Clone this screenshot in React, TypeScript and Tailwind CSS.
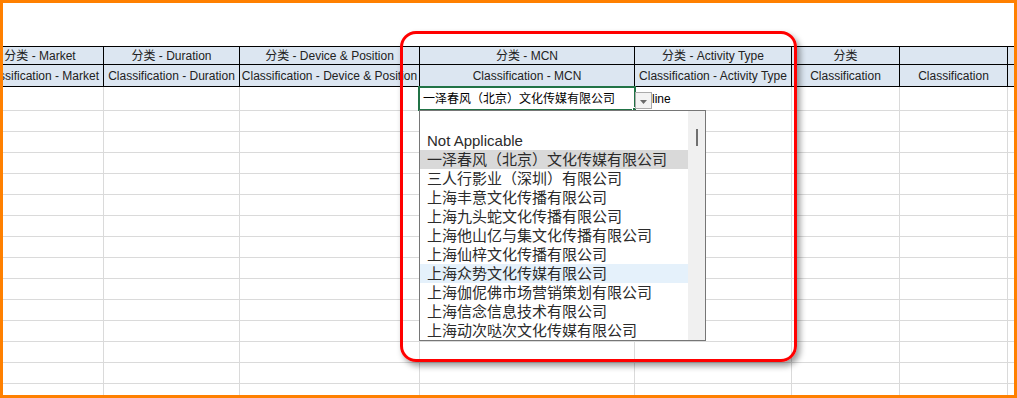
const colW = [
  "w-[127px]",
  "w-[136px]",
  "w-[180px]",
  "w-[215px]",
  "w-[157px]",
  "w-[108px]",
  "w-[108px]",
  "w-[220px]",
];

const head1 = ["分类 - Market", "分类 - Duration", "分类 - Device & Position", "分类 - MCN", "分类 - Activity Type", "分类", "", ""];
const head2 = [
  "Classification - Market",
  "Classification - Duration",
  "Classification - Device & Position",
  "Classification - MCN",
  "Classification - Activity Type",
  "Classification",
  "Classification",
  "",
];

const options = [
  "Not Applicable",
  "一泽春风（北京）文化传媒有限公司",
  "三人行影业（深圳）有限公司",
  "上海丰意文化传播有限公司",
  "上海九头蛇文化传播有限公司",
  "上海他山亿与集文化传播有限公司",
  "上海仙梓文化传播有限公司",
  "上海众势文化传媒有限公司",
  "上海伽伲佛市场营销策划有限公司",
  "上海信念信息技术有限公司",
  "上海动次哒次文化传媒有限公司",
];

const font = "font-['Liberation_Sans','Noto_Sans_CJK_SC',sans-serif]";

const App = () => {
  return (
    <div className="w-[1017px] h-[398px] border-[3px] border-[#ff8000] bg-white overflow-hidden">
      <div className={`relative w-full h-full overflow-hidden pt-[43px] ${font}`}>
        <div className="-ml-[26px] w-max text-[12px] text-[#222]">
          {/* header row 1 */}
          <div className="flex">
            {head1.map((t, i) => (
              <div
                key={i}
                className={`${colW[i]} h-[19px] shrink-0 bg-[#dce6f1] border-t border-b border-r border-black flex items-center justify-center whitespace-nowrap overflow-hidden leading-none`}
              >
                {t}
              </div>
            ))}
          </div>
          {/* header row 2 */}
          <div className="flex">
            {head2.map((t, i) => (
              <div
                key={i}
                className={`${colW[i]} h-[22px] shrink-0 bg-[#dce6f1] border-b border-r border-black flex items-center justify-center whitespace-nowrap overflow-visible leading-none`}
              >
                {t}
              </div>
            ))}
          </div>
          {/* first data row */}
          <div className="flex">
            {colW.map((w, i) => (
              <div
                key={i}
                className={`${w} h-[24px] shrink-0 border-b border-r border-[#dadada] flex items-center whitespace-nowrap overflow-hidden leading-none`}
              >
                {i === 3 && <span className="pl-[3px] text-black">一泽春风（北京）文化传媒有限公司</span>}
                {i === 4 && <span className="pl-[1px] text-black">Online</span>}
              </div>
            ))}
          </div>
          {Array.from({ length: 15 }).map((_, r) => (
            <div key={r} className="flex">
              {colW.map((w, i) => (
                <div key={i} className={`${w} h-[21px] shrink-0 border-b border-r border-[#dadada]`} />
              ))}
            </div>
          ))}
        </div>

        {/* active cell */}
        <div className="absolute left-[415px] top-[83px] w-[218px] h-[25px] border-2 border-[#217346]" />
        <div className="absolute left-[629px] top-[104px] w-[5px] h-[5px] bg-[#217346] border border-white" />

        {/* dropdown button */}
        <div className="absolute left-[632px] top-[89px] w-[17px] h-[17px] border border-[#ababab] bg-[#f3f3f3] flex items-center justify-center">
          <svg width="7" height="4" viewBox="0 0 7 4" className="mt-[2px]">
            <path d="M0 0 L7 0 L3.5 4 Z" fill="#6b6b6b" />
          </svg>
        </div>

        {/* dropdown list */}
        <div className="absolute left-[416px] top-[107px] w-[287px] h-[231px] border border-[#767676] bg-white flex">
          <div className="flex-1 pt-[20px]">
            {options.map((o, i) => (
              <div
                key={o}
                className={`h-[19px] pl-[7px] flex items-center text-[15px] leading-none whitespace-nowrap text-[#2b2b2b] ${
                  i === 1 ? "bg-[#d9d9d9]" : i === 7 ? "bg-[#e5f1fb]" : ""
                }`}
              >
                {o}
              </div>
            ))}
          </div>
          <div className="w-[17px] bg-[#f0f0f0] flex justify-center">
            <div className="mt-[18px] w-[2px] h-[17px] bg-[#707070]" />
          </div>
        </div>

        {/* annotation */}
        <div className="absolute left-[397px] top-[28px] w-[397px] h-[331px] border-[3px] border-[#ff0000] rounded-[16px] shadow-[3px_4px_6px_rgba(0,0,0,0.4)] pointer-events-none" />
      </div>
    </div>
  );
};

export default App;
